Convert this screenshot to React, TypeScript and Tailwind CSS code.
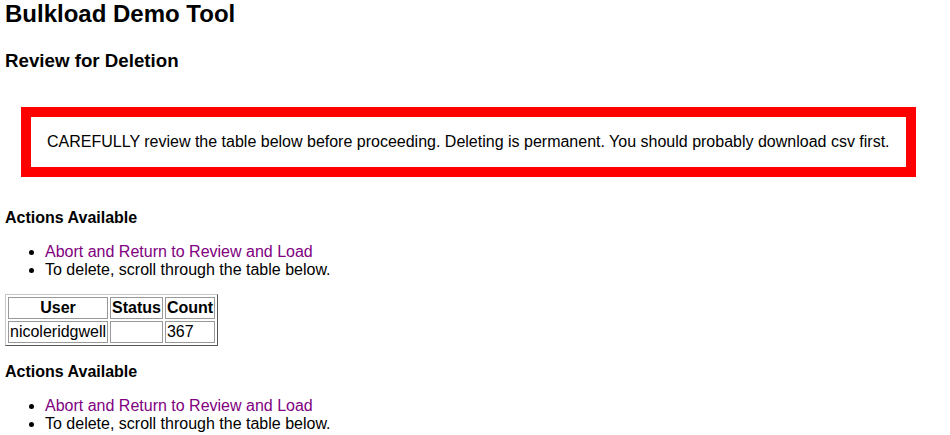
import React from "react";

function ActionsList() {
  return (
    <>
      <h4 className="text-[16px] font-bold leading-[normal]">Actions Available</h4>
      <ul className="mt-4 list-disc pl-10 text-[16px] leading-[normal]">
        <li>
          <a href="#" className="text-[#800080] no-underline">
            Abort and Return to Review and Load
          </a>
        </li>
        <li>To delete, scroll through the table below.</li>
      </ul>
    </>
  );
}

export default function App() {
  const rows = [{ user: "nicoleridgwell", status: "", count: "367" }];

  return (
    <div className="min-h-screen bg-white px-[5px] font-['Liberation_Sans',Arial,sans-serif] text-black">
      <h1 className="text-[24px] font-bold leading-[normal]">Bulkload Demo Tool</h1>
      <h3 className="mt-[22px] text-[18.72px] font-bold leading-[normal]">Review for Deletion</h3>

      <div className="ml-4 mt-[35px] w-[895px] border-[10px] border-[#ff0000] p-4 text-[16px] leading-[normal]">
        CAREFULLY review the table below before proceeding. Deleting is permanent. You should probably
        download csv first.
      </div>

      <div className="mt-[32px]">
        <ActionsList />
      </div>

      <table className="mt-[15px] border-separate border-spacing-[2px] border border-t-[#c8c8c8] border-l-[#c8c8c8] border-r-[#555] border-b-[#555] text-[16px] leading-[normal]">
        <thead>
          <tr>
            <th className="border border-[#999] p-px text-center font-bold">User</th>
            <th className="border border-[#999] p-px text-center font-bold">Status</th>
            <th className="border border-[#999] p-px text-center font-bold">Count</th>
          </tr>
        </thead>
        <tbody>
          {rows.map((r) => (
            <tr key={r.user}>
              <td className="border border-[#999] p-px">{r.user}</td>
              <td className="border border-[#999] p-px">{r.status}</td>
              <td className="border border-[#999] p-px">{r.count}</td>
            </tr>
          ))}
        </tbody>
      </table>

      <div className="mt-[17px]">
        <ActionsList />
      </div>
    </div>
  );
}
